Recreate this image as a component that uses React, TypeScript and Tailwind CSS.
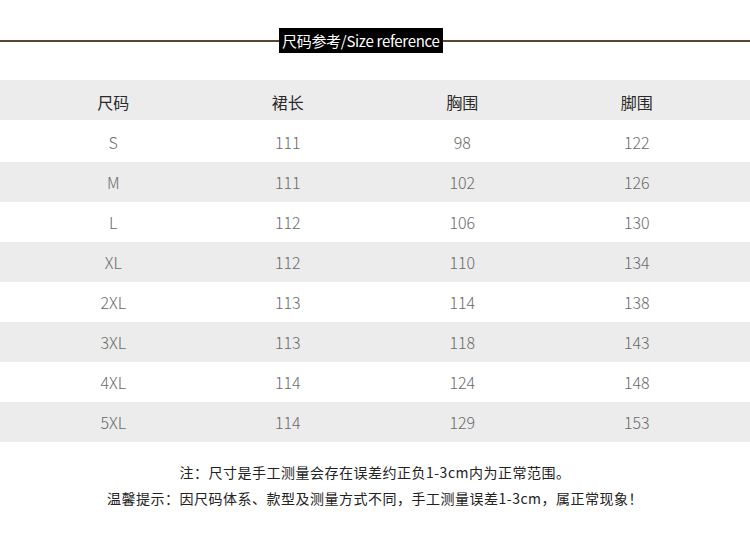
const headers = ['尺码', '裙长', '胸围', '脚围'];

const rows: string[][] = [
    ['S', '111', '98', '122'],
    ['M', '111', '102', '126'],
    ['L', '112', '106', '130'],
    ['XL', '112', '110', '134'],
    ['2XL', '113', '114', '138'],
    ['3XL', '113', '118', '143'],
    ['4XL', '114', '124', '148'],
    ['5XL', '114', '129', '153'],
];

const font = "font-['Noto_Sans_CJK_SC','Noto_Sans',sans-serif]";

export default function App() {
    return (
        <div className={`w-[750px] h-[537px] bg-white ${font}`}>
            {/* title bar */}
            <div className="pt-[28px] flex items-center">
                <div className="w-[279px] h-[2px] bg-[#5b4631]" />
                <div className="h-[25px] px-[3px] bg-black text-white text-[15px] leading-[25px] tracking-[-0.3px]">
                    尺码参考/Size reference
                </div>
                <div className="flex-1 h-[2px] bg-[#5b4631]" />
            </div>

            {/* table */}
            <div className="mt-[27px]">
                <div className="h-[40px] pt-[3px] bg-[#ececec] px-[26px] grid grid-cols-4 items-center text-center text-[16px] text-[#2a2a2a]">
                    {headers.map((h) => (
                        <div key={h}>{h}</div>
                    ))}
                </div>
                <div className="h-[2px]" />
                {rows.map((r, i) => (
                    <div
                        key={r[0]}
                        className={`h-[40px] px-[26px] grid grid-cols-4 items-center text-center text-[16px] text-[#6a6a6a] font-light ${
                            i % 2 === 1 ? 'bg-[#ececec]' : 'bg-white'
                        }`}
                    >
                        {r.map((c, j) => (
                            <div key={j}>{c}</div>
                        ))}
                    </div>
                ))}
            </div>

            {/* notes */}
            <div className="mt-[17px] flex flex-col items-center text-[14px] text-[#222] leading-[26px] tracking-[0.5px]">
                <div>注：尺寸是手工测量会存在误差约正负1-3cm内为正常范围。</div>
                <div>温馨提示：因尺码体系、款型及测量方式不同，手工测量误差1-3cm，属正常现象！</div>
            </div>
        </div>
    );
}
